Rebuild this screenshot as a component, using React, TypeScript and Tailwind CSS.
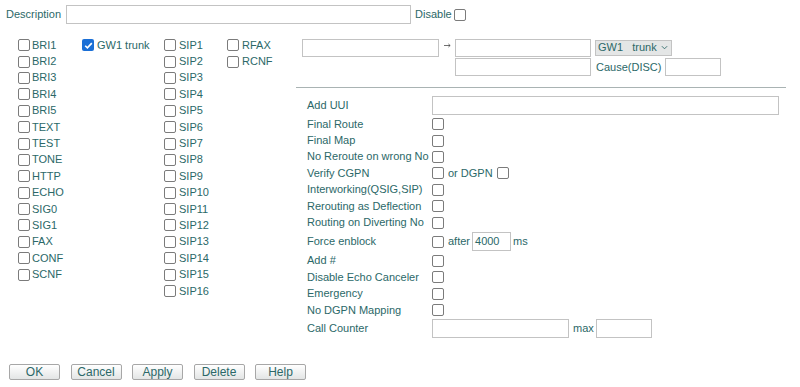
import React from 'react';

const Box = ({ checked }: { checked?: boolean }) =>
  checked ? (
    <span className="inline-flex items-center justify-center w-[12px] h-[12px] rounded-[2px] bg-[#1a6fd6] shrink-0">
      <svg viewBox="0 0 12 12" className="w-[11px] h-[11px]">
        <path d="M2.4 6.3l2.4 2.3 4.8-5.2" fill="none" stroke="#fff" strokeWidth={1.8} />
      </svg>
    </span>
  ) : (
    <span className="inline-block w-[12px] h-[12px] rounded-[2px] border border-[#7b7b7b] bg-white shrink-0" />
  );

const Field = ({ className = '', value = '' }: { className?: string; value?: string }) => (
  <span className={`inline-flex items-center border border-[#c3c3c3] bg-white px-[2px] text-[11px] shrink-0 ${className}`}>{value}</span>
);

const col1 = ['BRI1', 'BRI2', 'BRI3', 'BRI4', 'BRI5', 'TEXT', 'TEST', 'TONE', 'HTTP', 'ECHO', 'SIG0', 'SIG1', 'FAX', 'CONF', 'SCNF'];
const col3 = Array.from({ length: 16 }, (_, i) => `SIP${i + 1}`);

function Item({ label, checked, gap = 'gap-[2px]' }: { label: string; checked?: boolean; gap?: string }) {
  return (
    <div className={`flex items-center h-[16.4px] ${gap}`}>
      <Box checked={checked} />
      <span className="leading-none">{label}</span>
    </div>
  );
}

function Row({ label, h = 'h-[16.4px]', children }: { label: string; h?: string; children?: React.ReactNode }) {
  return (
    <div className={`flex items-center ${h}`}>
      <span className="w-[125px] shrink-0 leading-none">{label}</span>
      {children ?? <Box />}
    </div>
  );
}

export default function App() {
  return (
    <div className="w-[800px] h-[387px] bg-white overflow-hidden font-['Liberation_Sans',Arial,sans-serif] text-[11px] text-[#2b6868]">
      <div className="flex items-center h-[19px] mt-[5px] pl-[6px]">
        <span>Description</span>
        <Field className="ml-[5px] w-[345px] h-[19px]" />
        <span className="ml-[4px]">Disable</span>
        <span className="ml-[2px] flex"><Box /></span>
      </div>

      <div className="flex">
        <div className="w-[296px] shrink-0 pt-[13px] pl-[18px] flex">
          <div className="w-[64px] flex flex-col">
            {col1.map((l) => <Item key={l} label={l} />)}
          </div>
          <div className="w-[82px] flex flex-col">
            <Item label="GW1 trunk" checked gap="gap-[3px]" />
          </div>
          <div className="w-[63px] flex flex-col">
            {col3.map((l) => <Item key={l} label={l} gap="gap-[3px]" />)}
          </div>
          <div className="flex flex-col">
            <Item label="RFAX" gap="gap-[3px]" />
            <Item label="RCNF" gap="gap-[3px]" />
          </div>
        </div>

        <div className="pt-[14px] w-[490px]">
          <div className="flex items-center h-[19px] pl-[6px]">
            <Field className="w-[137px] h-[18px]" />
            <span className="w-[16px] flex justify-center">
              <svg viewBox="0 0 8 5" className="w-[7px] h-[5px] -mt-[4px]">
                <path d="M0 2.5h7M5 0.7l2 1.8-2 1.8" fill="none" stroke="#333" strokeWidth={0.8} />
              </svg>
            </span>
            <Field className="w-[136px] h-[18px]" />
            <span className="ml-[4px] w-[77px] h-[16px] flex items-center bg-[#e4e6e6] border border-[#c3c3c3] pl-[2px]">
              <span className="whitespace-pre">GW1   trunk</span>
              <svg viewBox="0 0 8 5" className="ml-[4px] w-[7px] h-[5px]">
                <path d="M1 1l3 3 3-3" fill="none" stroke="#2b6868" strokeWidth={1} />
              </svg>
            </span>
          </div>
          <div className="flex items-center h-[20px] pl-[159px]">
            <Field className="w-[136px] h-[18px]" />
            <span className="ml-[5px]">Cause(DISC)</span>
            <Field className="ml-[4px] w-[56px] h-[18px]" />
          </div>
          <div className="mt-[10px] border-t border-[#a9b3b3]" />

          <div className="pl-[11px] mt-[7px]">
            <Row label="Add UUI" h="h-[21px]">
              <Field className="w-[347px] h-[19px]" />
            </Row>
            <Row label="Final Route" />
            <Row label="Final Map" />
            <Row label="No Reroute on wrong No" />
            <Row label="Verify CGPN">
              <Box />
              <span className="ml-[4px] mr-[4px]">or DGPN</span>
              <Box />
            </Row>
            <Row label="Interworking(QSIG,SIP)" />
            <Row label="Rerouting as Deflection" />
            <Row label="Routing on Diverting No" />
            <Row label="Force enblock" h="h-[22px]">
              <Box />
              <span className="ml-[4px]">after</span>
              <Field className="ml-[2px] w-[39px] h-[19px]" value="4000" />
              <span className="ml-[2px]">ms</span>
            </Row>
            <Row label="Add #" />
            <Row label="Disable Echo Canceler" />
            <Row label="Emergency" />
            <Row label="No DGPN Mapping" />
            <Row label="Call Counter" h="h-[20px]">
              <Field className="w-[137px] h-[19px]" />
              <span className="ml-[4px]">max</span>
              <Field className="ml-[2px] w-[56px] h-[19px]" />
            </Row>
          </div>
        </div>
      </div>

      <div className="flex gap-[10.5px] pl-[9px] mt-[26px]">
        {['OK', 'Cancel', 'Apply', 'Delete', 'Help'].map((b) => (
          <span
            key={b}
            className="w-[51px] h-[16px] flex items-center justify-center border border-[#a7a7a7] rounded-[2px] bg-gradient-to-b from-white to-[#e3e5e5] text-[12px] leading-none"
          >
            {b}
          </span>
        ))}
      </div>
    </div>
  );
}
